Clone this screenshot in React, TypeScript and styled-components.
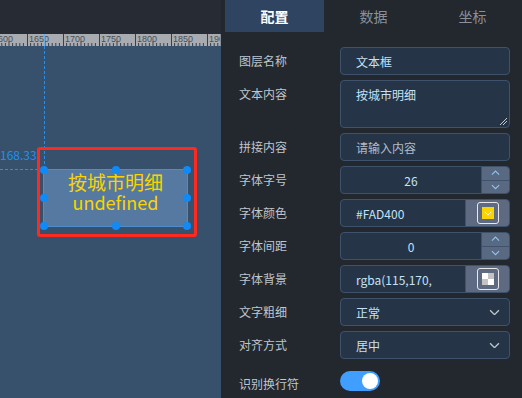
import React from "react";
import styled, { createGlobalStyle } from "styled-components";

const Global = createGlobalStyle`
  html, body { margin: 0; padding: 0; background: #23272e; }
  body { font-family: "Noto Sans CJK SC", "Noto Sans", sans-serif; }
  * { box-sizing: border-box; }
`;

const Page = styled.div`
  display: flex;
  width: 522px;
  height: 398px;
  overflow: hidden;
  background: #23272e;
`;

const CanvasArea = styled.div`
  width: 221px;
  display: flex;
  flex-direction: column;
  flex-shrink: 0;
`;

const TopStrip = styled.div`
  height: 34px;
  background: #262b34;
`;

const RulerBar = styled.div`
  height: 12px;
  background: #a8acb1;
  border-right: 1px solid #8a8f95;
`;

const Stage = styled.div`
  flex: 1;
  position: relative;
  background: #37516c;
  overflow: hidden;
`;

const GuideV = styled.div`
  position: absolute;
  left: 44px;
  top: 0;
  height: 123px;
  border-left: 1px dashed #2a8ee8;
`;

const GuideH = styled.div`
  position: absolute;
  left: 0;
  top: 123px;
  width: 43px;
  border-top: 1px dashed #2a8ee8;
`;

const GuideLabel = styled.div`
  position: absolute;
  left: 0;
  top: 101px;
  font-size: 12px;
  line-height: 16px;
  color: #1e8ff0;
`;

const SelectFrame = styled.div`
  position: absolute;
  left: 37px;
  top: 101px;
  width: 160px;
  height: 90px;
  border: 3px solid #ff2a1f;
  border-radius: 3px;
`;

const TextNode = styled.div`
  position: absolute;
  left: 43px;
  top: 123px;
  width: 145px;
  height: 58px;
  background: #5679a1;
  border: 1px solid #4f8ccc;
  color: #fad400;
  text-align: center;
  padding-top: 1px;
`;

const NodeLine = styled.div<{ $size: number }>`
  font-size: ${(p) => p.$size}px;
  line-height: 21px;
`;

const Handle = styled.span<{ $x: string; $y: string }>`
  position: absolute;
  width: 8px;
  height: 8px;
  border-radius: 50%;
  background: #0f8af7;
  left: calc(${(p) => p.$x} - 4px);
  top: calc(${(p) => p.$y} - 4px);
`;

const Panel = styled.div`
  flex: 1;
  display: flex;
  flex-direction: column;
  background: #23272e;
`;

const Tabs = styled.div`
  display: flex;
  height: 32px;
  padding-left: 4px;
`;

const Tab = styled.div<{ $active?: boolean }>`
  flex: 1;
  display: flex;
  align-items: center;
  justify-content: center;
  font-size: 14px;
  font-weight: ${(p) => (p.$active ? 700 : 400)};
  color: ${(p) => (p.$active ? "#ffffff" : "#8a9099")};
  background: ${(p) => (p.$active ? "#2e4460" : "transparent")};
`;

const Form = styled.div`
  display: grid;
  grid-template-columns: 101px 170px;
  row-gap: 5px;
  padding: 15px 0 0 18px;
`;

const Label = styled.div`
  font-size: 12px;
  line-height: 28px;
  color: #bfc6cd;
  white-space: nowrap;
`;

const Field = styled.div<{ $h?: number }>`
  position: relative;
  height: ${(p) => p.$h ?? 28}px;
  display: flex;
  background: #263448;
  border: 1px solid #3e526c;
  border-radius: 4px;
  overflow: hidden;
`;

const FieldText = styled.div<{ $muted?: boolean; $center?: boolean; $top?: boolean }>`
  flex: 1;
  display: flex;
  align-items: ${(p) => (p.$top ? "flex-start" : "center")};
  justify-content: ${(p) => (p.$center ? "center" : "flex-start")};
  padding: ${(p) => (p.$top ? "5px 0 0 15px" : p.$center ? "0" : "0 0 0 15px")};
  font-size: 12px;
  color: ${(p) => (p.$muted ? "#b3bcc7" : "#c4e2f7")};
  white-space: nowrap;
  overflow: hidden;
`;

const Resize = styled.svg`
  position: absolute;
  right: 2px;
  bottom: 2px;
`;

const Spinner = styled.div`
  width: 28px;
  display: flex;
  flex-direction: column;
  background: #5a6982;
  border-left: 1px solid #3e526c;
`;

const SpinBtn = styled.div<{ $top?: boolean }>`
  flex: 1;
  display: flex;
  align-items: center;
  justify-content: center;
  border-bottom: ${(p) => (p.$top ? "1px solid #3e526c" : "none")};
`;

const PickerSide = styled.div`
  width: 44px;
  display: flex;
  align-items: center;
  justify-content: center;
  background: #5e6a82;
  border-left: 1px solid #3e526c;
`;

const Swatch = styled.div`
  width: 22px;
  height: 22px;
  border: 1px solid #e8e8e8;
  border-radius: 3px;
  display: flex;
  align-items: center;
  justify-content: center;
`;

const SwatchFill = styled.div<{ $color?: string; $checker?: boolean }>`
  width: 12px;
  height: 12px;
  display: flex;
  align-items: center;
  justify-content: center;
  background: ${(p) =>
    p.$checker
      ? "conic-gradient(#c4c4c4 0 25%, #ffffff 0 50%, #c4c4c4 0 75%, #ffffff 0)"
      : p.$color};
  background-size: 12px 12px;
`;

const ChevronBox = styled.div`
  width: 30px;
  display: flex;
  align-items: center;
  justify-content: center;
`;

const SwitchRow = styled.div`
  height: 28px;
  display: flex;
  align-items: center;
  padding-top: 6px;
`;

const Switch = styled.div`
  width: 40px;
  height: 20px;
  border-radius: 10px;
  background: #409eff;
  display: flex;
  justify-content: flex-end;
  align-items: center;
  padding-right: 2px;
`;

const Knob = styled.div`
  width: 16px;
  height: 16px;
  border-radius: 50%;
  background: #ffffff;
`;

const SwitchLabel = styled(Label)`
  padding-top: 6px;
`;

const Chevron = ({ up, color = "#8fc6ee", size = 9 }: { up?: boolean; color?: string; size?: number }) => (
  <svg width={size} height={size / 1.6} viewBox="0 0 10 6">
    <polyline
      points={up ? "1,5 5,1 9,5" : "1,1 5,5 9,1"}
      fill="none"
      stroke={color}
      strokeWidth="1.2"
    />
  </svg>
);

const Ruler = () => {
  const majors = [-9, 27, 63, 99, 135, 171, 207];
  const labels = ["1600", "1650", "1700", "1750", "1800", "1850", "1900"];
  const ticks: React.ReactNode[] = [];
  for (let m = -9; m < 221; m += 36) {
    for (let i = 1; i < 10; i++) {
      const x = m + i * 3.6;
      const h = i === 5 ? 5 : 3;
      ticks.push(<line key={`${m}-${i}`} x1={x} x2={x} y1={12 - h} y2={12} stroke="#3a3f47" strokeWidth="1" />);
    }
  }
  return (
    <svg width="220" height="12" style={{ display: "block" }}>
      {ticks}
      {majors.map((x, i) => (
        <g key={x}>
          <line x1={x + 0.5} x2={x + 0.5} y1={0} y2={12} stroke="#3a3f47" strokeWidth="1" />
          <text x={x + 2} y={8} fontSize="9" fill="#4a4f57" fontFamily="Liberation Sans, sans-serif">
            {labels[i]}
          </text>
        </g>
      ))}
      <line x1={44.5} x2={44.5} y1={0} y2={12} stroke="#6aaee8" strokeWidth="1" />
    </svg>
  );
};

export default function App() {
  return (
    <Page>
      <Global />
      <CanvasArea>
        <TopStrip />
        <RulerBar>
          <Ruler />
        </RulerBar>
        <Stage>
          <GuideV />
          <GuideH />
          <GuideLabel>168.33</GuideLabel>
          <SelectFrame />
          <TextNode>
            <NodeLine $size={19}>按城市明细</NodeLine>
            <NodeLine $size={18}>undefined</NodeLine>
            <Handle $x="0px" $y="0px" />
            <Handle $x="50%" $y="0px" />
            <Handle $x="100%" $y="0px" />
            <Handle $x="0px" $y="50%" />
            <Handle $x="100%" $y="50%" />
            <Handle $x="0px" $y="100%" />
            <Handle $x="50%" $y="100%" />
            <Handle $x="100%" $y="100%" />
          </TextNode>
        </Stage>
      </CanvasArea>
      <Panel>
        <Tabs>
          <Tab $active>配置</Tab>
          <Tab>数据</Tab>
          <Tab>坐标</Tab>
        </Tabs>
        <Form>
          <Label>图层名称</Label>
          <Field>
            <FieldText>文本框</FieldText>
          </Field>

          <Label>文本内容</Label>
          <Field $h={48}>
            <FieldText $top>按城市明细</FieldText>
            <Resize width="7" height="7" viewBox="0 0 7 7">
              <line x1="0" y1="7" x2="7" y2="0" stroke="#c8ccd2" strokeWidth="1" />
              <line x1="3" y1="7" x2="7" y2="3" stroke="#c8ccd2" strokeWidth="1" />
            </Resize>
          </Field>

          <Label>拼接内容</Label>
          <Field>
            <FieldText $muted>请输入内容</FieldText>
          </Field>

          <Label>字体字号</Label>
          <Field>
            <FieldText $center>26</FieldText>
            <Spinner>
              <SpinBtn $top>
                <Chevron up />
              </SpinBtn>
              <SpinBtn>
                <Chevron />
              </SpinBtn>
            </Spinner>
          </Field>

          <Label>字体颜色</Label>
          <Field>
            <FieldText>#FAD400</FieldText>
            <PickerSide>
              <Swatch>
                <SwatchFill $color="#fad400">
                  <Chevron color="#ffffff" size={8} />
                </SwatchFill>
              </Swatch>
            </PickerSide>
          </Field>

          <Label>字体间距</Label>
          <Field>
            <FieldText $center>0</FieldText>
            <Spinner>
              <SpinBtn $top>
                <Chevron up />
              </SpinBtn>
              <SpinBtn>
                <Chevron />
              </SpinBtn>
            </Spinner>
          </Field>

          <Label>字体背景</Label>
          <Field>
            <FieldText>rgba(115,170,</FieldText>
            <PickerSide>
              <Swatch>
                <SwatchFill $checker />
              </Swatch>
            </PickerSide>
          </Field>

          <Label>文字粗细</Label>
          <Field>
            <FieldText>正常</FieldText>
            <ChevronBox>
              <Chevron color="#c0c6cd" size={11} />
            </ChevronBox>
          </Field>

          <Label>对齐方式</Label>
          <Field>
            <FieldText>居中</FieldText>
            <ChevronBox>
              <Chevron color="#c0c6cd" size={11} />
            </ChevronBox>
          </Field>

          <SwitchLabel>识别换行符</SwitchLabel>
          <SwitchRow>
            <Switch>
              <Knob />
            </Switch>
          </SwitchRow>
        </Form>
      </Panel>
    </Page>
  );
}
